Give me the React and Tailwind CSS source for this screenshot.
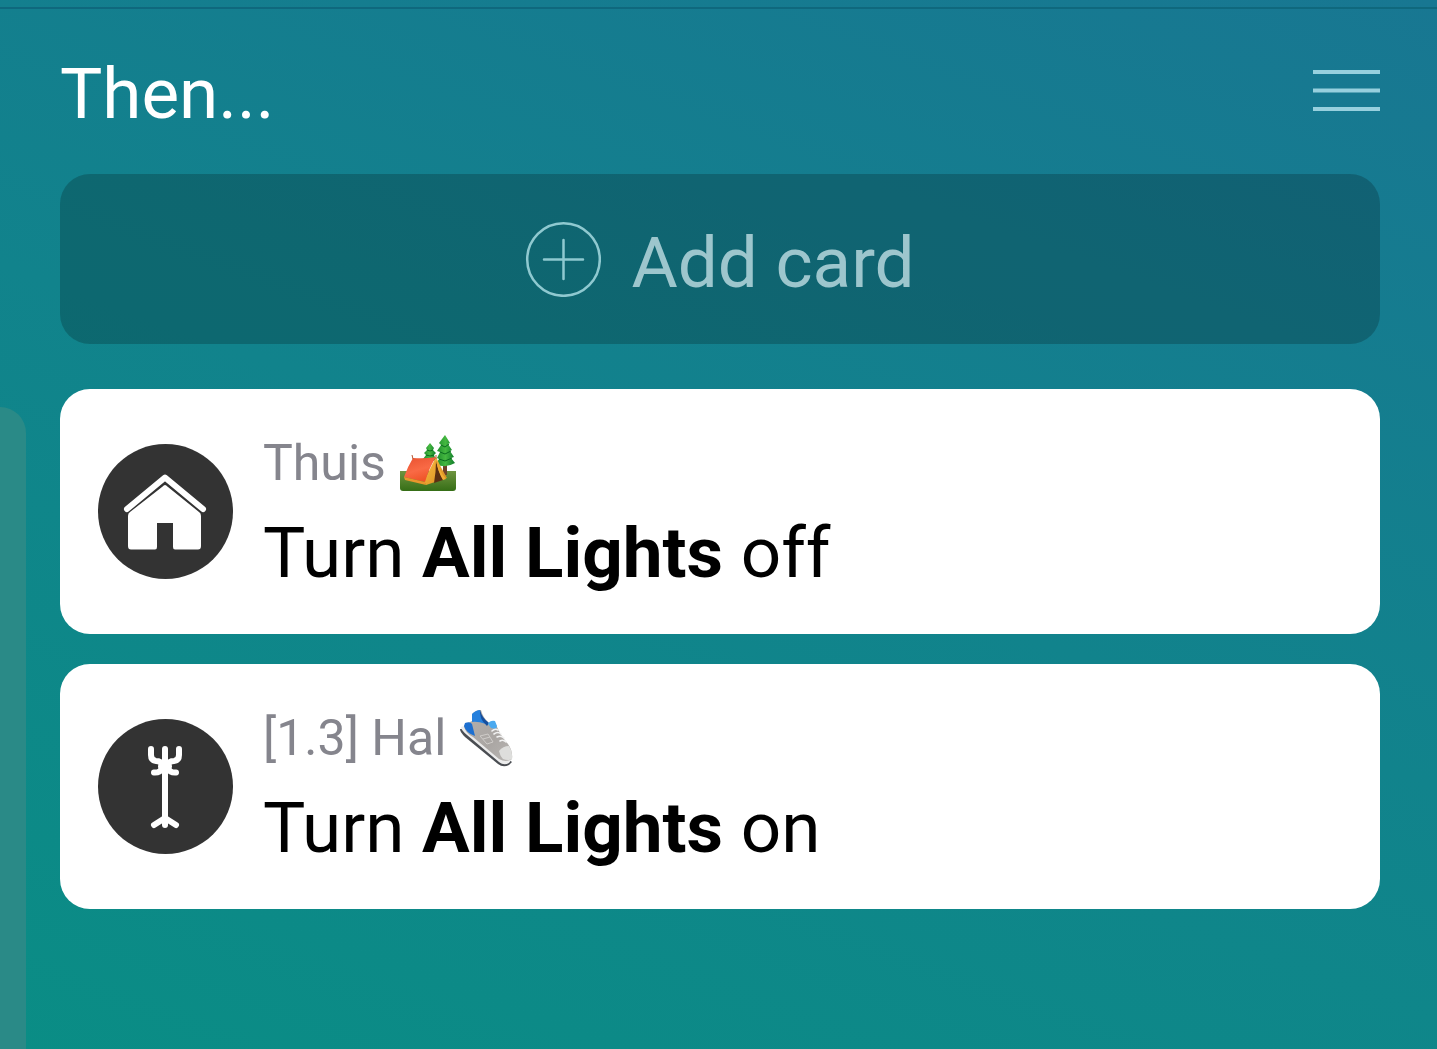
import React from 'react';

const HomeIcon = () => (
  <svg viewBox="0 0 135 135" className="h-full w-full" aria-hidden="true">
    <path
      d="M29 65 L67 33.5 L105 65"
      fill="none"
      stroke="white"
      strokeWidth="6"
      strokeLinecap="round"
      strokeLinejoin="round"
    />
    <path
      d="M67 41 Q68 41 70 43 L101 68 Q103 69 103 72 V102 Q103 105.5 100 105.5 H77 Q75 105.5 75 103 V79 H59 V103 Q59 105.5 57 105.5 H33 Q30 105.5 30 102 V72 Q30 69 32 68 L64 43 Q66 41 67 41 Z"
      fill="white"
    />
  </svg>
);

const CoatRackIcon = () => (
  <svg viewBox="0 0 135 135" className="h-full w-full" aria-hidden="true">
    <g fill="none" stroke="white" strokeWidth="6" strokeLinecap="round" strokeLinejoin="round">
      <path d="M67 30 V106" />
      <path d="M53 30 V36 Q53 41.5 58 42 Q63 42 65 46" />
      <path d="M81 30 V36 Q81 41.5 76 42 Q71 42 69 46" />
      <path d="M56 53.5 Q62 54 65 49 M78 53.5 Q72 54 69 49" />
      <path d="M67 99 L56 106 M67 99 L78 106" />
    </g>
    <circle cx="67" cy="47.5" r="7" fill="white" />
  </svg>
);

const TentIcon = () => (
  <svg viewBox="0 0 58 58" className="h-[58px] w-[58px]" role="img" aria-label="Camping">
    <defs>
      <linearGradient id="grass" x1="0" y1="0" x2="0" y2="1">
        <stop offset="0" stopColor="#6f9440" />
        <stop offset="1" stopColor="#356e16" />
      </linearGradient>
      <linearGradient id="canvas" x1="0" y1="0" x2="0.4" y2="1">
        <stop offset="0" stopColor="#e8502f" />
        <stop offset="0.6" stopColor="#f96a45" />
        <stop offset="1" stopColor="#ef5428" />
      </linearGradient>
      <linearGradient id="front" x1="0" y1="0" x2="1" y2="1">
        <stop offset="0" stopColor="#f9bd45" />
        <stop offset="1" stopColor="#d98a1c" />
      </linearGradient>
      <linearGradient id="tree" x1="0" y1="0" x2="1" y2="0">
        <stop offset="0" stopColor="#1c8a2c" />
        <stop offset="0.5" stopColor="#45b840" />
        <stop offset="1" stopColor="#0f7a2b" />
      </linearGradient>
    </defs>
    <path d="M2 37 H58 V54 Q58 57 55 57 H5 Q2 57 2 54 Z" fill="url(#grass)" />
    <path d="M45 28 H49 V41 H45 Z" fill="#6f4228" />
    <path
      d="M32 9 L28 14 L29 16 L26 19 L28 21 L25 25 Q31 29 38 26 L36 21 L38 19 L35 16 L36 14 Z"
      fill="url(#tree)"
    />
    <path
      d="M47 1 L41 9 L43 11 L39 17 L42 18 L39 24 L41 25 L38 30 Q47 35 57 29 L53 24 L56 23 L52 17 L54 16 L50 10 L52 9 Z"
      fill="url(#tree)"
    />
    <path d="M43 11 L47 13 L51 10 M42 18 L47 20 L53 17 M41 25 L47 27 L54 24 M29 16 L32 17 L35 16 M28 21 L32 22 L36 21" fill="none" stroke="#0a6b1f" strokeWidth="1" />
    <path d="M38 23 Q43 34 49 44 L28 51 L26 47 Z" fill="url(#front)" />
    <path d="M15 24 Q27 25 38 23 Q31 34 27 48 L6 43 Q10 32 15 24 Z" fill="url(#canvas)" />
    <path d="M6 43 L27 48 L28 51 L7 46 Z" fill="#e9962c" />
    <path d="M38 27 Q38 38 36 49 L45 46 Q40 37 38 27 Z" fill="#5c2f12" />
    <path d="M38 26 Q41 37 48 45 L45 46 Q40 38 38 26 Z" fill="#f2ad35" />
    <path d="M14 21 L15 25 M38 21 V25" stroke="#b7532d" strokeWidth="1" />
  </svg>
);

const ShoeIcon = () => (
  <svg viewBox="0 0 58 58" className="h-[58px] w-[58px]" role="img" aria-label="Sneaker">
    <defs>
      <linearGradient id="shoe" x1="0" y1="0" x2="1" y2="1">
        <stop offset="0" stopColor="#b3afac" />
        <stop offset="0.6" stopColor="#aaa6a3" />
        <stop offset="1" stopColor="#b9b6b3" />
      </linearGradient>
    </defs>
    <path d="M2 20 Q2 23 7 28 L40 55 Q45 59 51 56 L54 53 L50 50 L7 20 Z" fill="#4a4d52" />
    <path d="M3 18 Q3 21 9 26 L41 53 Q46 57 51 54 L54 50 L49 46 L9 16 Z" fill="#ececec" />
    <path
      d="M14 5 Q18 1 23 1 Q25 9 31 14 L36 12 L40 20 Q43 27 50 35 Q55 42 54 50 Q48 54 41 50 L15 28 Q7 24 6 17 Q9 14 14 12 Z"
      fill="url(#shoe)"
    />
    {/* Heel, collar and tongue */}
    <path d="M14 5 Q18 1 22 1 Q22 9 28 15 Q19 12 14 13 Z" fill="#2580dd" />
    <path d="M22 1 Q24 9 31 14 L29 17 Q21 10 22 1 Z" fill="#164f9e" />
    <path d="M7 14 Q12 12 14 15 L17 27 Q8 24 6 17 Z" fill="#1c6fd0" />
    <path d="M30 15 Q32 11 37 12 L39 17 L38 20 L33 19 Z" fill="#4aa9ef" />
    <path d="M41 42 Q45 37 51 37 Q55 43 54 50 Q50 52 45 50 Q42 47 41 42 Z" fill="#dededc" />
    <path
      d="M34 22 Q37 19 40 21 M36 25 Q40 22 43 25 M39 28 Q43 26 46 29 M42 32 Q45 30 48 33"
      fill="none"
      stroke="#f2f2f2"
      strokeWidth="1.6"
      strokeLinecap="round"
    />
    <path d="M22 27 L30 25 L35 33 L29 35 Z M25 30 L32 28" fill="none" stroke="#cfccc9" strokeWidth="1" />
  </svg>
);

const cards = [
  { id: 1, zone: 'Thuis', emoji: <TentIcon />, icon: <HomeIcon />, state: 'off' },
  { id: 2, zone: '[1.3] Hal', emoji: <ShoeIcon />, icon: <CoatRackIcon />, state: 'on' }
];

function App() {
  return (
    <div className="flex min-h-screen flex-col bg-linear-[20deg] from-[#0a8d85] via-[#11838c] to-[#187792] font-[Roboto,sans-serif]">
      <div className="h-[9px] border-b-2 border-[#0f687d]" />

      <div className="flex grow">
        {/* Edge of the neighbouring column */}
        <div className="mt-[398px] w-[26px] shrink-0 rounded-tr-[28px] bg-[#2a8a87]" />

        <main className="grow pr-[57px] pl-[34px]">
          <header className="flex items-start justify-between pt-[45px] pb-10">
            <h1 className="text-[71px] leading-[80px] text-white">Then...</h1>
            <button type="button" aria-label="Menu" className="flex h-[73px] items-center">
              <svg viewBox="0 0 67 41" className="h-[41px] w-[67px]">
                <path d="M0 2 H67 M0 20.5 H67 M0 39 H67" stroke="#97d0de" strokeWidth="4" />
              </svg>
            </button>
          </header>

          <button
            type="button"
            className="flex h-[170px] w-full items-center justify-center gap-[30px] rounded-[30px] bg-black/20 text-[71px] leading-[80px] text-[#9dc6cd]"
          >
            <svg viewBox="0 0 76 76" className="h-[76px] w-[76px]" aria-hidden="true">
              <g fill="none" stroke="#8fc9d0" strokeWidth="2.5" strokeLinecap="round">
                <circle cx="38.5" cy="38.5" r="36.3" />
                <path d="M38.5 19 V58 M19 38.5 H58" />
              </g>
            </svg>
            <span className="pt-2">Add card</span>
          </button>

          <ul className="mt-[45px] flex flex-col gap-[30px]">
            {cards.map(card => (
              <li key={card.id} className="flex items-center gap-[30px] rounded-[30px] bg-white px-[38px] pt-10 pb-[41px]">
                <div className="h-[135px] w-[135px] shrink-0 rounded-full bg-[#333333]">{card.icon}</div>
                <div className="pt-1">
                  <p className="flex items-center gap-3 text-[50px] leading-[60px] text-[#85858d]">
                    {card.zone}
                    {card.emoji}
                  </p>
                  <p className="mt-5 text-[71px] leading-[80px] text-black">
                    Turn <strong className="font-bold">All Lights</strong> {card.state}
                  </p>
                </div>
              </li>
            ))}
          </ul>
        </main>
      </div>
    </div>
  );
}

export default App;
